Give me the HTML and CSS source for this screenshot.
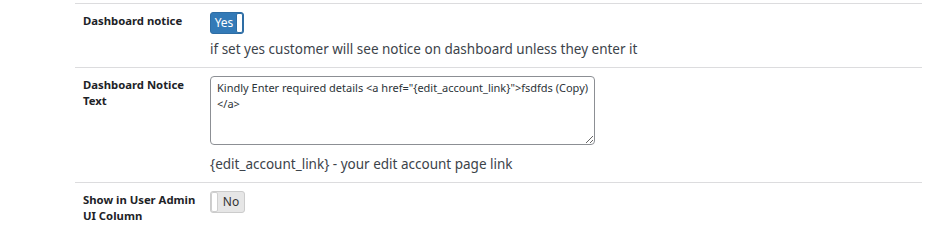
FILE: index.html
```html
<!DOCTYPE html>
<html>
<head>
<meta charset="utf-8">
<link rel="stylesheet" href="styles.css">
</head>
<body>
<div class="settings">
  <div class="row">
    <div class="label">Dashboard notice</div>
    <div class="field">
      <div class="toggle on"><span class="toggle-text">Yes</span><span class="knob"></span></div>
      <p class="desc desc-first">if set yes customer will see notice on dashboard unless they enter it</p>
    </div>
  </div>
  <div class="row">
    <div class="label">Dashboard Notice Text</div>
    <div class="field">
      <textarea class="notice-text">Kindly Enter required details &lt;a href="{edit_account_link}"&gt;fsdfds (Copy)&lt;/a&gt;</textarea>
      <p class="desc desc-second">{edit_account_link} - your edit account page link</p>
    </div>
  </div>
  <div class="row">
    <div class="label">Show in User Admin UI Column</div>
    <div class="field">
      <div class="toggle off"><span class="knob"></span><span class="toggle-text">No</span></div>
    </div>
  </div>
</div>
</body>
</html>
```
FILE: styles.css
```css
html, body {
  margin: 0;
  padding: 0;
  background: #fff;
}
body {
  font-family: "Noto Sans", "Open Sans", sans-serif;
  color: #3c434a;
}
.settings {
  margin: 3px 13px 0 75px;
}
.row {
  display: flex;
  border-top: 1px solid #dcdcde;
  padding: 8px 0 8px 0;
}
.label {
  width: 117px;
  flex: none;
  padding: 0 10px 0 8px;
  font-size: 11.3px;
  font-weight: 700;
  line-height: 15.5px;
  color: #1d2327;
  padding-top: 1px;
}
.field {
  flex: 1;
}
.toggle {
  display: flex;
  align-items: stretch;
  box-sizing: border-box;
  width: 34px;
  height: 22px;
  border-radius: 3px;
  overflow: hidden;
  font-size: 12px;
}
.toggle.on {
  background: #337ab7;
  border: 1px solid #2e6da4;
  color: #fff;
}
.toggle.off {
  width: 35px;
  background: #e6e6e6;
  border: 1px solid #cccccc;
  color: #333;
}
.toggle-text {
  flex: 1;
  display: flex;
  align-items: center;
  justify-content: center;
  line-height: 1;
}
.toggle.on .toggle-text {
  padding-left: 1px;
}
.knob {
  width: 5px;
  flex: none;
  background: #fff;
  border: 1px solid #cfcfcf;
  border-radius: 2px;
}
.toggle.on .knob {
  border-color: #2e6da4;
}
.desc {
  margin: 0;
  font-size: 13.5px;
  line-height: 20px;
  color: #3c434a;
}
.desc-first {
  margin-top: 5px;
}
.desc-second {
  margin-top: 9px;
}
.notice-text {
  display: block;
  box-sizing: border-box;
  width: 385px;
  height: 69px;
  margin: 0;
  padding: 3px 2px 3px 6px;
  border: 1px solid #8c8f94;
  border-radius: 4px;
  font-family: "Noto Sans", "Open Sans", sans-serif;
  font-size: 11px;
  line-height: 16px;
  color: #2c3338;
  resize: vertical;
}
```
